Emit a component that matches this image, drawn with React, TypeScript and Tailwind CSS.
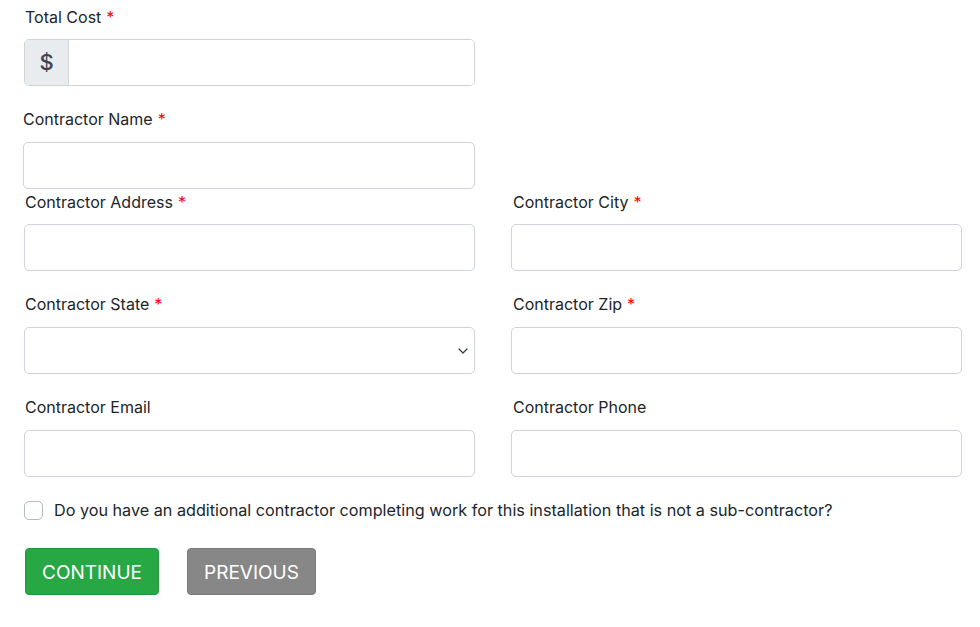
import React from "react";

const font = { fontFamily: "Inter, 'Noto Sans', sans-serif" };

function Label({ text, req }: { text: string; req?: boolean }) {
  return (
    <div className="h-6 text-[16px] leading-6 text-[#212529]">
      {text}
      {req && <span className="text-[#ff0000] ml-[5px]">*</span>}
    </div>
  );
}

function Input() {
  return <div className="h-[47px] w-full rounded-[5px] border border-[#ced4da] bg-white" />;
}

export default function App() {
  return (
    <div className="w-[980px] h-[627px] bg-white text-[#212529]" style={font}>
      <div className="pt-[5px] pl-[24px] w-[962px]">
        {/* Total Cost */}
        <div className="w-[451px]">
          <div className="pl-[1px]"><Label text="Total Cost" req /></div>
          <div className="mt-[10px] h-[47px] flex rounded-[5px] border border-[#ced4da] overflow-hidden">
            <div className="w-[44px] bg-[#e9ecef] border-r border-[#ced4da] flex items-center justify-center text-[22px] font-medium text-[#3d434a]">
              $
            </div>
            <div className="flex-1 bg-white" />
          </div>
        </div>
        {/* Name */}
        <div className="w-[452px] mt-[21px] -ml-[1px]">
          <Label text="Contractor Name" req />
          <div className="mt-[11px]"><Input /></div>
        </div>
        {/* Address / City */}
        <div className="grid grid-cols-2 gap-x-[36px] mt-[1px]">
          <div>
            <div className="pl-[1px]"><Label text="Contractor Address" req /></div>
            <div className="mt-[10px]"><Input /></div>
          </div>
          <div>
            <div className="pl-[2px]"><Label text="Contractor City" req /></div>
            <div className="mt-[10px]"><Input /></div>
          </div>
        </div>
        {/* State / Zip */}
        <div className="grid grid-cols-2 gap-x-[36px] mt-[21px]">
          <div>
            <div className="pl-[1px]"><Label text="Contractor State" req /></div>
            <div className="mt-[11px] h-[47px] w-full rounded-[5px] border border-[#ced4da] bg-white flex items-center justify-end pr-[5px]">
              <svg width="12" height="12" viewBox="0 0 12 12" fill="none">
                <path d="M2 4l4 4 4-4" stroke="#343a40" strokeWidth="1.2" strokeLinecap="round" strokeLinejoin="round" />
              </svg>
            </div>
          </div>
          <div>
            <div className="pl-[2px]"><Label text="Contractor Zip" req /></div>
            <div className="mt-[11px]"><Input /></div>
          </div>
        </div>
        {/* Email / Phone */}
        <div className="grid grid-cols-2 gap-x-[36px] mt-[21px]">
          <div>
            <div className="pl-[1px]"><Label text="Contractor Email" /></div>
            <div className="mt-[11px]"><Input /></div>
          </div>
          <div>
            <div className="pl-[2px]"><Label text="Contractor Phone" /></div>
            <div className="mt-[11px]"><Input /></div>
          </div>
        </div>
        {/* Checkbox */}
        <div className="flex items-center mt-[21px] h-[24px]">
          <div className="w-[19px] h-[19px] rounded-[5px] border border-[#b4bac1] bg-white" />
          <div className="ml-[11px] text-[16.2px] leading-6 text-[#212529]">
            Do you have an additional contractor completing work for this installation that is not a sub-contractor?
          </div>
        </div>
        {/* Buttons */}
        <div className="flex mt-[26px] pl-[1px] gap-[28px]">
          <button className="h-[47px] w-[134px] pt-[3px] rounded-[4px] bg-[#28a745] border border-[#22973d] text-white text-[19px] uppercase">
            Continue
          </button>
          <button className="h-[47px] w-[129px] pt-[3px] rounded-[4px] bg-[#878787] border border-[#7a7a7a] text-white text-[19px] uppercase">
            Previous
          </button>
        </div>
      </div>
    </div>
  );
}
